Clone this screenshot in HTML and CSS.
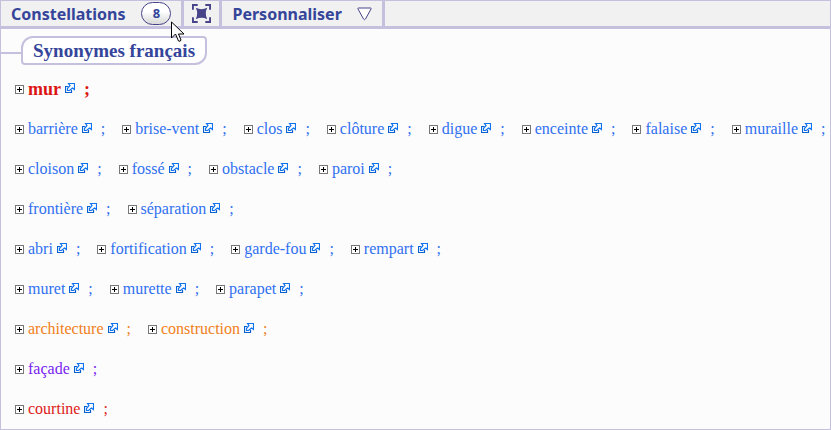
FILE: index.html
```html
<!DOCTYPE html>
<html lang="fr">
<head>
  <meta charset="UTF-8" />
  <meta name="viewport" content="width=device-width, initial-scale=1.0"/>
  <title>Synonymes français</title>
  <link rel="stylesheet" href="styles.css">
</head>
<body>
  <svg class="sprite" aria-hidden="true">
    <symbol id="plus" viewBox="0 0 9 9" shape-rendering="crispEdges">
      <rect x="0.5" y="0.5" width="8" height="8" fill="#fff" stroke="#777"/>
      <path d="M2 4.5h5M4.5 2v5" stroke="#000"/>
    </symbol>
    <symbol id="ext" viewBox="0 0 10 11">
      <path d="M3 3.500H.5v6h6V7" fill="none" stroke="#0a62d0" stroke-width="1.200"/>
      <path d="M3.500.5h6v6L7.500 5 4.500 7.500h-2v-2L5 2.500z" fill="#fff" stroke="#1173ee" stroke-width="1.200"/>
    </symbol>
  </svg>

  <div class="frame">
    <div class="toolbar">
      <button class="tool constellations">Constellations <span class="badge">8</span></button>
      <button class="tool expand" aria-label="Plein écran">
        <svg width="19" height="19" viewBox="0 0 20 20">
          <path d="M1 6V1h5M14 1h5v5M19 14v5h-5M6 19H1v-5" fill="none" stroke="#47448a" stroke-width="2"/>
          <path d="M4 4q6 3 12 0q-3 6 0 12q-6-3-12 0q3-6 0-12z" fill="#47448a"/>
        </svg>
      </button>
      <button class="tool customize">Personnaliser
        <svg width="15" height="14" viewBox="0 0 15 14">
          <path d="M1.500 1h12q1 0 .5 1L8.500 12q-1 1.500-2 0L1 2Q.5 1 1.500 1z" fill="#fff" stroke="#47448a"/>
        </svg>
      </button>
    </div>

    <div class="heading">
      <h1>Synonymes français</h1>
    </div>

    <div class="groups" id="groups"></div>
  </div>

  <svg class="cursor" width="15" height="22" viewBox="0 0 15 22" aria-hidden="true">
    <path d="M.5 1v16l4-4 3 7q2 1 2.500-1l-2.500-6h5.500z" fill="#fff" stroke="#000"/>
  </svg>

  <script>
    const groups = [
      { color: "main", words: ["mur"] },
      { color: "blue", words: ["barrière", "brise-vent", "clos", "clôture", "digue", "enceinte", "falaise", "muraille"] },
      { color: "blue", words: ["cloison", "fossé", "obstacle", "paroi"] },
      { color: "blue", words: ["frontière", "séparation"] },
      { color: "blue", words: ["abri", "fortification", "garde-fou", "rempart"] },
      { color: "blue", words: ["muret", "murette", "parapet"] },
      { color: "orange", words: ["architecture", "construction"] },
      { color: "purple", words: ["façade"] },
      { color: "red", words: ["courtine"] }
    ];

    document.getElementById("groups").innerHTML = groups.map(group => `
      <ul class="group ${group.color}">
        ${group.words.map(word => `
          <li class="term">
            <button class="plus" aria-label="Déplier ${word}"><svg width="9" height="9"><use href="#plus"/></svg></button>
            <a class="word" href="#${word}">${word}</a>
            <a class="ext" href="#${word}" aria-label="Ouvrir ${word}"><svg width="10" height="11"><use href="#ext"/></svg></a>
            <span class="sep">;</span>
          </li>`).join("")}
      </ul>`).join("");
  </script>
</body>
</html>
```

FILE: styles.css
```css
* {
  box-sizing: border-box;
}
body {
  margin: 0;
  font-family: "Liberation Serif", "Times New Roman", serif;
  font-size: 16px;
  background: #fcfcfc;
}
button {
  padding: 0;
  border: none;
  background: none;
  cursor: pointer;
}
a {
  color: inherit;
  text-decoration: none;
}
svg {
  display: block;
}
.sprite {
  position: absolute;
  width: 0;
  height: 0;
}
.frame {
  min-height: 100vh;
  border: 1px solid #c4c0de;
}
.toolbar {
  display: flex;
  height: 28px;
  background: #f1f1f1;
  border-bottom: 3px solid #c4c0de;
}
.tool {
  display: flex;
  align-items: center;
  border-right: 3px solid #c4c0de;
  font-family: "Noto Sans", sans-serif;
  font-size: 16px;
  font-weight: bold;
  line-height: 24px;
  color: #34459a;
}
.constellations {
  gap: 16px;
  padding: 0 10px;
}
.expand {
  padding: 0 8px;
}
.customize {
  gap: 15px;
  padding: 0 10px;
}
.badge {
  width: 30px;
  height: 23px;
  border: 1px solid #47448a;
  border-radius: 12px;
  background: linear-gradient(#fff 40%, #d8d8d8);
  font-size: 13px;
  line-height: 21px;
  text-align: center;
}
.heading {
  display: flex;
  padding-top: 7px;
}
.heading::before {
  content: "";
  width: 20px;
  height: 16px;
  border-bottom: 2px solid #c4c0de;
}
h1 {
  margin: 0;
  padding: 0 10px;
  border: 2px solid #c4c0de;
  border-radius: 12px 4px 12px 4px;
  background: #fff;
  font-size: 19px;
  line-height: 25px;
  color: #34459a;
}
.groups {
  padding: 4px 0 0 14px;
}
.group {
  display: flex;
  gap: 17px;
  margin: 0;
  padding: 0;
  list-style: none;
  line-height: 40px;
}
.term {
  display: flex;
  align-items: center;
  height: 40px;
}
.word {
  margin: 0 4px;
}
.ext {
  padding-bottom: 2px;
}
.sep {
  margin-left: 9px;
}
.main {
  font-size: 18px;
  font-weight: bold;
  color: #dc1414;
}
.blue {
  color: #3070f0;
}
.orange {
  color: #f08020;
}
.purple {
  color: #7a1cf0;
}
.red {
  color: #dc2018;
}
.cursor {
  position: absolute;
  left: 171px;
  top: 21px;
}
```
